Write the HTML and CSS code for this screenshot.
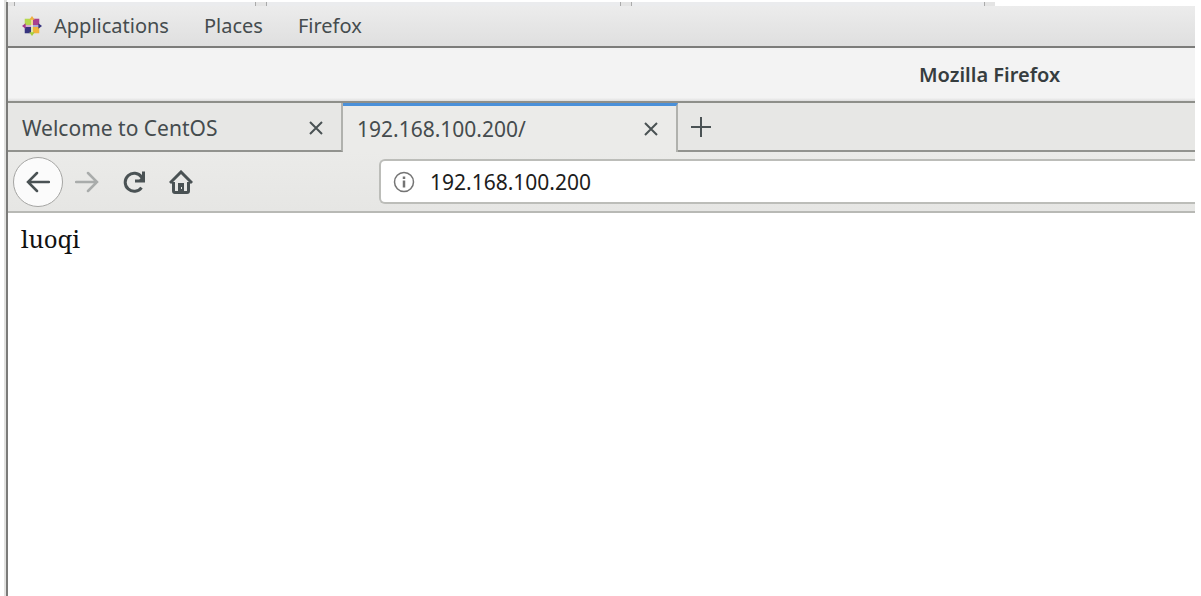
FILE: index.html
```
<!DOCTYPE html>
<html lang="en">
<head>
  <meta charset="UTF-8">
  <title>Mozilla Firefox</title>
  <link rel="stylesheet" href="styles.css">
</head>
<body>
  <div class="window">
    <div class="behind">
      <span class="behind-first"></span>
      <span class="behind-tab"></span>
      <span class="behind-tab"></span>
    </div>

    <nav class="menubar">
      <button class="menu apps">
        <svg width="20" height="20" viewBox="0 0 22 22">
          <path d="M3 3h7v7H3z" fill="#b5d94c"/>
          <path d="M12 3h7v7h-7z" fill="#a8408f"/>
          <path d="M3 12h7v7H3z" fill="#37347f"/>
          <path d="M12 12h7v7h-7z" fill="#f2b43c"/>
          <path d="M10 3h2v7h-2z" fill="#f4d58c"/>
          <path d="M10 12h2v7h-2z" fill="#dceaa8"/>
          <path d="M3 10h7v2H3z" fill="#d9a6cd"/>
          <path d="M12 10h7v2h-7z" fill="#a9a7d0"/>
          <path d="M8 4l3-4 3 4z" fill="#f0b040"/>
          <path d="M22 11l-4-3v6z" fill="#37347f"/>
          <path d="M8 18l3 4 3-4z" fill="#a7cf3a"/>
          <path d="M0 11l4-3v6z" fill="#a3388c"/>
        </svg>
        Applications
      </button>
      <button class="menu">Places</button>
      <button class="menu">Firefox</button>
    </nav>

    <header class="titlebar">Mozilla Firefox</header>

    <div class="tabs">
      <div class="tab">
        <a href="#">Welcome to CentOS</a>
        <button class="close" aria-label="Close tab">
          <svg width="14" height="14" viewBox="0 0 14 14"><path d="M1 1l12 12M13 1L1 13"/></svg>
        </button>
      </div>
      <div class="tab active">
        <a href="#">192.168.100.200/</a>
        <button class="close" aria-label="Close tab">
          <svg width="14" height="14" viewBox="0 0 14 14"><path d="M1 1l12 12M13 1L1 13"/></svg>
        </button>
      </div>
      <div class="tab-rest">
        <button class="new-tab" aria-label="New tab">
          <svg width="20" height="20" viewBox="0 0 20 20"><path d="M10 0v20M0 10h20"/></svg>
        </button>
      </div>
    </div>

    <div class="toolbar">
      <button class="back" aria-label="Back">
        <svg width="24" height="22" viewBox="0 0 24 22"><path d="M23 11H2M11 2l-9 9 9 9"/></svg>
      </button>
      <button class="tool forward" aria-label="Forward" disabled>
        <svg width="24" height="22" viewBox="0 0 24 22"><path d="M1 11h21M13 2l9 9-9 9"/></svg>
      </button>
      <button class="tool" aria-label="Reload">
        <svg width="24" height="22" viewBox="0 0 24 22">
          <path d="M19.500 16.500a9 9 0 1 1 0-10.500l1 2"/>
          <path d="M21.500 0.500v9.500H13"/>
          <path class="solid" d="M22 4v6h-6z"/>
        </svg>
      </button>
      <button class="tool" aria-label="Home">
        <svg width="24" height="24" viewBox="0 0 24 24">
          <path d="M1 13L12 2l11 11M4.500 12v9q0 1.500 1.500 1.500h12q1.500 0 1.500-1.500v-9"/>
          <path class="solid" d="M9 13h6v9H9z"/>
          <path d="M12.500 17v2" stroke="#e9e9e7" stroke-width="1"/>
        </svg>
      </button>
      <div class="urlbar">
        <svg width="22" height="22" viewBox="0 0 22 22">
          <circle cx="11" cy="11" r="9.500"/>
          <path d="M11 9.500v7" stroke-width="2.500"/>
          <path d="M11 5.500v2.500" stroke-width="2.500"/>
        </svg>
        <input type="text" value="192.168.100.200" aria-label="Address">
      </div>
    </div>

    <main class="page">luoqi</main>
  </div>
</body>
</html>
```
FILE: styles.css
```
* {
  box-sizing: border-box;
}
body {
  margin: 0;
  padding: 2px 6px 0 6px;
  background: linear-gradient(to right, #fff 4px, #e2e2e0 4px, #e2e2e0 7px, #fff 7px);
  color: #454c4e;
  font: 20px/24px "Noto Sans", sans-serif;
}
button {
  display: flex;
  align-items: center;
  justify-content: center;
  padding: 0;
  border: none;
  background: none;
  color: inherit;
  font: inherit;
}
svg {
  flex: none;
  fill: none;
  stroke: #4a5254;
  stroke-width: 3;
}
.window {
  min-height: calc(100vh - 2px);
  border-left: 2px solid #7b7b79;
}

/* bottom edge of the window behind */
.behind {
  display: flex;
  gap: 10px;
  width: 987px;
  height: 4px;
  padding-right: 10px;
  background: #e4e4e4;
}
.behind span {
  border: solid #aaa;
  border-width: 0 1px;
  background: #ebecee;
}
.behind-first {
  width: 242px;
  margin-left: 6px;
}
.behind-tab {
  flex: 1;
}

.menubar {
  display: flex;
  gap: 35px;
  height: 42px;
  padding: 0 14px;
  border-bottom: 2px solid #7c7c7a;
  background: linear-gradient(#ececec, #dfdfdf);
}
.apps {
  gap: 12px;
}
.apps svg {
  stroke: none;
}

.titlebar {
  height: 55px;
  padding: 15px 0 0 911px;
  border-bottom: 2px solid #8e8f8a;
  background: linear-gradient(#f3f3f3 94%, #dedede);
  color: #363d3f;
  font-weight: 600;
  white-space: nowrap;
}

.tabs {
  display: flex;
  height: 49px;
  background: #e7e7e5;
  font-size: 21px;
}
.tab {
  display: flex;
  align-items: center;
  justify-content: space-between;
  width: 335px;
  padding: 2px 18px 0 14px;
  border-right: 2px solid #b0b1ad;
  border-bottom: 2px solid #92938f;
}
.tab a {
  color: inherit;
  text-decoration: none;
}
.tab.active {
  padding-top: 0;
  border-top: 3px solid #4a90d9;
  border-bottom: none;
  background: #ebebe9;
}
.close svg,
.new-tab svg {
  display: block;
}
.close svg,
.new-tab svg {
  stroke-width: 2;
}
.tab-rest {
  display: flex;
  flex: 1;
  padding-left: 13px;
  border-bottom: 2px solid #92938f;
}

.toolbar {
  display: flex;
  align-items: center;
  gap: 23px;
  height: 61px;
  padding-left: 5px;
  border-bottom: 2px solid #b8b9b5;
  background: linear-gradient(#ebebe9, #e6e6e4);
}
.back {
  width: 50px;
  height: 50px;
  margin-right: -11px;
  border: 1px solid #a5a5a3;
  border-radius: 50%;
  background: #fbfbfb;
}
.back svg,
.forward svg {
  stroke-width: 2.500;
  stroke-linecap: round;
}
.forward svg {
  stroke: #a9acab;
}
.solid {
  fill: #4a5254;
  stroke: none;
}
.urlbar {
  display: flex;
  flex: 1;
  align-items: center;
  gap: 15px;
  height: 45px;
  margin-left: 163px;
  padding-left: 12px;
  border: 2px solid #bcbdb9;
  border-right: none;
  border-radius: 6px 0 0 6px;
  background: #fff;
}
.urlbar svg {
  stroke: #747474;
  stroke-width: 1.500;
}
.urlbar input {
  flex: 1;
  min-width: 0;
  padding: 0;
  border: none;
  outline: none;
  background: none;
  color: #1c1c1c;
  font: inherit;
  font-size: 21px;
}

.page {
  padding: 10px 13px;
  color: #111;
  font: 24px/32px "Noto Serif", "Liberation Serif", serif;
}
```
